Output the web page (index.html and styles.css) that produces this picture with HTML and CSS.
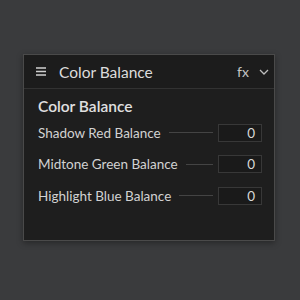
FILE: index.html
```html
<!DOCTYPE html>
<html lang="en">
<head>
    <meta charset="UTF-8">
    <title>Color Balance</title>
    <link rel="stylesheet" href="styles.css">
</head>
<body>
    <div class="panel">
        <div class="panel-header">
            <svg class="menu-icon" width="10" height="9" viewBox="0 0 10 9">
                <path d="M0 1h10M0 4.5h10M0 8h10" stroke="#cfcfcf" stroke-width="1.3"/>
            </svg>
            <span class="panel-title">Color Balance</span>
            <span class="fx">fx</span>
            <svg class="chevron" width="10" height="6" viewBox="0 0 10 6">
                <path d="M1 1l4 4 4-4" fill="none" stroke="#bdbdbd" stroke-width="1.3"/>
            </svg>
        </div>
        <div class="panel-body">
            <h3>Color Balance</h3>
            <div class="row">
                <label>Shadow Red Balance</label>
                <div class="slider"></div>
                <div class="value">0</div>
            </div>
            <div class="row">
                <label>Midtone Green Balance</label>
                <div class="slider"></div>
                <div class="value">0</div>
            </div>
            <div class="row">
                <label>Highlight Blue Balance</label>
                <div class="slider"></div>
                <div class="value">0</div>
            </div>
        </div>
    </div>
</body>
</html>
```

FILE: styles.css
```css
* {
    margin: 0;
    padding: 0;
    box-sizing: border-box;
    font-family: Lato, 'Noto Sans', sans-serif;
}

body {
    background: #3a3b3d;
    height: 300px;
    padding: 54px 0 0 23px;
}

.panel {
    width: 252px;
    height: 187px;
    background: #1e1e1e;
    border: 1px solid #4a4a4a;
    box-shadow: 0 2px 6px rgba(0, 0, 0, 0.35);
}

.panel-header {
    height: 34px;
    display: flex;
    align-items: center;
    padding: 0 5px 0 12px;
    background: #1c1c1c;
    border-bottom: 1px solid #323232;
}

.menu-icon {
    margin-right: 13px;
}

.panel-title {
    flex: 1;
    color: #dcdcdc;
    font-size: 15.5px;
}

.fx {
    color: #c4c4c4;
    font-size: 14px;
    margin-right: 10px;
}

.panel-body {
    padding: 8px 12px 0 14px;
}

h3 {
    color: #e0e0e0;
    font-size: 15.5px;
    font-weight: 600;
    margin-bottom: 2px;
}

.row {
    display: flex;
    align-items: center;
    height: 31.5px;
}

.row label {
    color: #d2d2d2;
    font-size: 13.5px;
}

.slider {
    flex: 1;
    height: 1px;
    background: #444;
    margin: 0 5px 0 8px;
}

.value {
    width: 44px;
    height: 18px;
    border: 1px solid #383838;
    background: #1a1a1a;
    color: #d8d8d8;
    font-size: 13.5px;
    text-align: right;
    padding-right: 6px;
    line-height: 16px;
}
```
